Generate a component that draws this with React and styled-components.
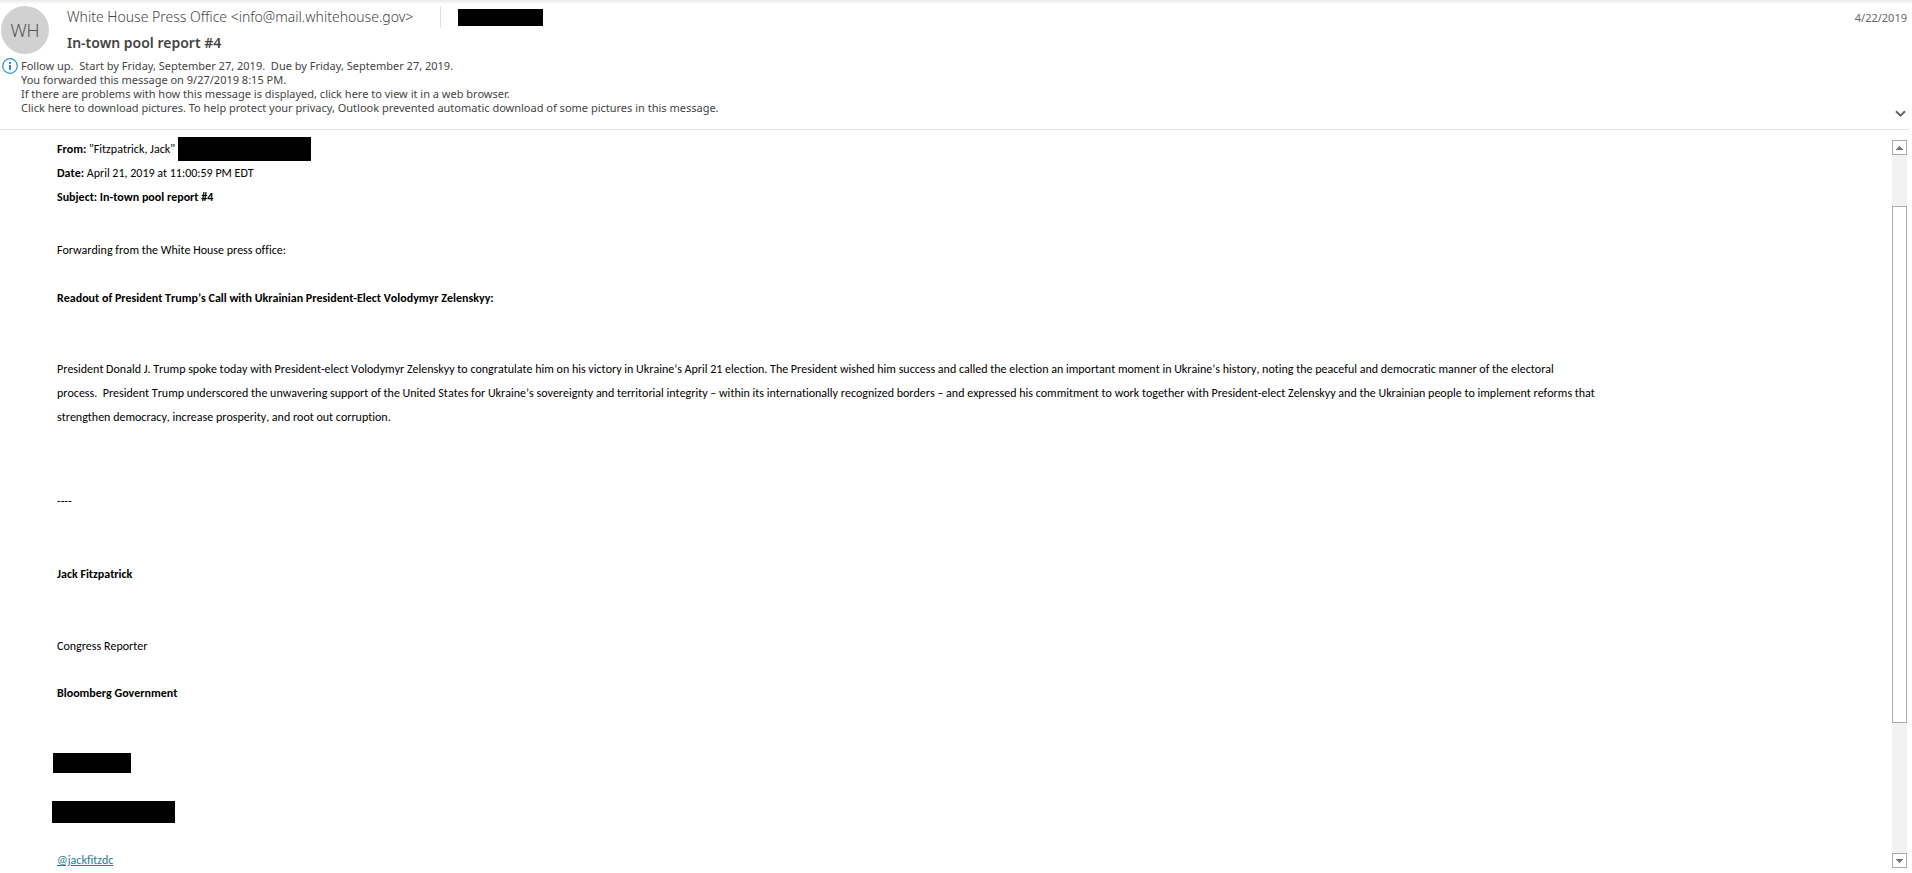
import React from 'react';
import styled, { createGlobalStyle } from 'styled-components';

const GlobalStyle = createGlobalStyle`
  *, *::before, *::after { box-sizing: border-box; }
  body { margin: 0; background: #fff; }
  button { font: inherit; }
`;

const Page = styled.div`
  min-height: 100vh;
  display: flex;
  flex-direction: column;
  background: #fff;
`;

const Header = styled.header`
  height: 130px;
  margin-right: 3px;
  display: flex;
  flex-direction: column;
  border-bottom: 1px solid #e1e1e1;
  font-family: 'Segoe UI', 'Noto Sans', 'Open Sans', sans-serif;
  color: #444;
`;

const TopShade = styled.div`
  height: 4px;
  margin-right: -3px;
  background: linear-gradient(#e9e9e9, #fff);
`;

const Summary = styled.div`
  display: flex;
  align-items: flex-start;
  padding: 2px 2px 0 1px;
  height: 54px;
`;

const Avatar = styled.div`
  width: 48px;
  height: 48px;
  border-radius: 50%;
  background: #d1d1d1;
  color: #555;
  font-size: 18px;
  font-weight: 300;
  line-height: 49px;
  text-align: center;
`;

const Titles = styled.div`
  flex: 1;
  padding-left: 18px;
`;

const SenderRow = styled.div`
  display: flex;
  align-items: center;
  height: 22px;
`;

const Sender = styled.span`
  font-size: 14px;
  font-weight: 300;
  color: #444;
  padding-right: 20px;
  border-right: 1px solid #e1e1e1;
  margin-right: 17px;
  line-height: 22px;
  min-width: 374px;
  white-space: nowrap;
`;

const Subject = styled.h1`
  margin: 4px 0 0;
  font-size: 14px;
  font-weight: 600;
  line-height: 22px;
  color: #444;
`;

const Received = styled.time`
  font-size: 11px;
  line-height: 24px;
  color: #666;
`;

const InfoBar = styled.div`
  flex: 1;
  display: flex;
  padding: 0 3px 0 2px;
`;

const InfoIcon = styled.svg`
  width: 16px;
  height: 16px;
  margin-right: 3px;
`;

const InfoLines = styled.div`
  flex: 1;
  padding-top: 1px;
  font-size: 11px;
  line-height: 14px;
  white-space: pre-wrap;
  color: #444;
`;

const ExpandButton = styled.button`
  align-self: flex-end;
  display: flex;
  margin-bottom: 11px;
  padding: 0;
  border: 0;
  background: none;
`;

const Reader = styled.div`
  flex: 1;
  display: flex;
`;

const Message = styled.main`
  flex: 1;
  padding: 7px 0 0 57px;
  font-family: Calibri, Carlito, Lato, sans-serif;
  font-size: 12px;
  line-height: 24px;
  font-kerning: none;
  font-variant-ligatures: none;
  color: #000;
`;

const Line = styled.p`
  margin: ${(p) => p.$gap || 0}px 0 0;
  height: ${(p) => (p.$tall ? 'auto' : '24px')};
  font-weight: ${(p) => (p.$strong ? 700 : 400)};
  max-width: 1580px;
  display: ${(p) => (p.$row ? 'flex' : 'block')};
  white-space: pre-wrap;
`;

const Redaction = styled.span`
  display: block;
  width: ${(p) => p.$w}px;
  height: ${(p) => p.$h}px;
  margin: ${(p) => p.$gap || 0}px 0 0 ${(p) => p.$outdent || 0}px;
  background: #000;
`;

const Handle = styled.a`
  color: #1f7a94;
  text-decoration: underline;
`;

const Scrollbar = styled.div`
  width: 15px;
  margin: 10px 5px 5px 0;
  display: flex;
  flex-direction: column;
  background: #f2f2f2;
`;

const ScrollButton = styled.button`
  width: 15px;
  height: 15px;
  padding: 0;
  display: grid;
  place-items: center;
  border: 1px solid #ababab;
  background: #fff;
`;

const Track = styled.div`
  flex: 1;
  display: flex;
  flex-direction: column;
`;

const TrackSpace = styled.div`
  flex: ${(p) => p.$share};
`;

const Thumb = styled.div`
  flex: 517;
  border: 1px solid #ababab;
  background: #fff;
`;

const Arrow = ({ down }) => (
  <svg width="7" height="4" viewBox="0 0 7 4" fill="#777" shapeRendering="crispEdges">
    <path d={down ? 'M0 0h7v1H6v1H5v1H4v1H3V3H2V2H1V1H0z' : 'M0 4h7V3H6V2H5V1H4V0H3v1H2v1H1v1H0z'} />
  </svg>
);

export default function App() {
  return (
    <Page>
      <GlobalStyle />
      <Header>
        <TopShade />
        <Summary>
          <Avatar>WH</Avatar>
          <Titles>
            <SenderRow>
              <Sender>White House Press Office &lt;info@mail.whitehouse.gov&gt;</Sender>
              <Redaction $w={85} $h={17} />
            </SenderRow>
            <Subject>In-town pool report #4</Subject>
          </Titles>
          <Received dateTime="2019-04-22">4/22/2019</Received>
        </Summary>
        <InfoBar>
          <InfoIcon viewBox="0 0 16 16">
            <circle cx="8" cy="8" r="7.3" fill="none" stroke="#2b8fd0" strokeWidth="1.2" />
            <path d="M7 4h2v2H7zM7 7h2v5H7z" fill="#2b8fd0" />
          </InfoIcon>
          <InfoLines>
            <div>{'Follow up.  Start by Friday, September 27, 2019.  Due by Friday, September 27, 2019.'}</div>
            <div>You forwarded this message on 9/27/2019 8:15 PM.</div>
            <div>If there are problems with how this message is displayed, click here to view it in a web browser.</div>
            <div>Click here to download pictures. To help protect your privacy, Outlook prevented automatic download of some pictures in this message.</div>
          </InfoLines>
          <ExpandButton aria-label="Expand header">
            <svg width="11" height="8" viewBox="0 0 11 8" fill="none" stroke="#666" strokeWidth="2">
              <path d="M1 1.2l4.5 4.5L10 1.2" />
            </svg>
          </ExpandButton>
        </InfoBar>
      </Header>
      <Reader>
        <Message>
          <Line $row>
            <span><b>From:</b> "Fitzpatrick, Jack"&nbsp;</span>
            <Redaction $w={133} $h={24} />
          </Line>
          <Line><b>Date:</b> April 21, 2019 at 11:00:59 PM EDT</Line>
          <Line $strong>Subject: In-town pool report #4</Line>
          <Line $gap={29}>Forwarding from the White House press office:</Line>
          <Line $gap={24} $strong>Readout of President Trump’s Call with Ukrainian President-Elect Volodymyr Zelenskyy:</Line>
          <Line $gap={47} $tall>
            President Donald J. Trump spoke today with President-elect Volodymyr Zelenskyy to congratulate him on his victory in Ukraine’s April 21 election. The President wished him success and called the election an important moment in Ukraine’s history, noting the peaceful and democratic manner of the electoral
            <br />
            {'process.  President Trump underscored the unwavering support of the United States for Ukraine’s sovereignty and territorial integrity – within its internationally recognized borders – and expressed his commitment to work together with President-elect Zelenskyy and the Ukrainian people to implement reforms that'}
            <br />
            strengthen democracy, increase prosperity, and root out corruption.
          </Line>
          <Line $gap={60}>----</Line>
          <Line $gap={49} $strong>Jack Fitzpatrick</Line>
          <Line $gap={48}>Congress Reporter</Line>
          <Line $gap={23} $strong>Bloomberg Government</Line>
          <Redaction $gap={48} $w={78} $h={20} $outdent={-4} />
          <Redaction $gap={28} $w={123} $h={22} $outdent={-5} />
          <Line $gap={25}><Handle href="#jackfitzdc">@jackfitzdc</Handle></Line>
        </Message>
        <Scrollbar>
          <ScrollButton aria-label="Scroll up"><Arrow /></ScrollButton>
          <Track>
            <TrackSpace $share={51} />
            <Thumb />
            <TrackSpace $share={130} />
          </Track>
          <ScrollButton aria-label="Scroll down"><Arrow down /></ScrollButton>
        </Scrollbar>
      </Reader>
    </Page>
  );
}
